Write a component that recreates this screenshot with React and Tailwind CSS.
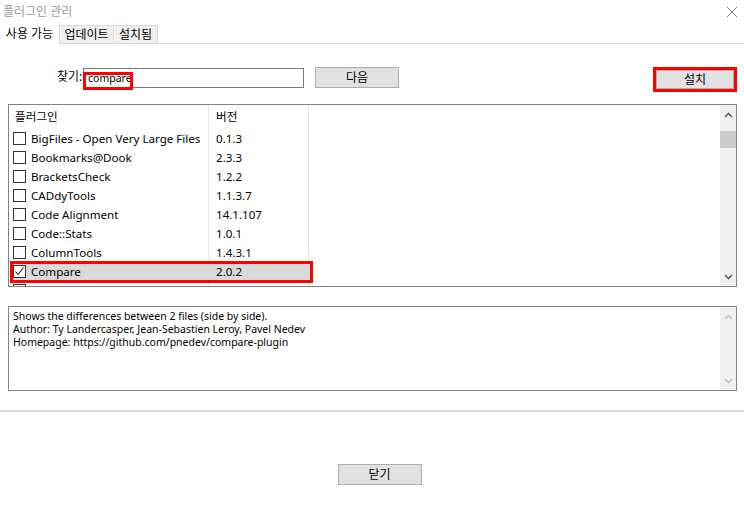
import React from "react";

const plugins = [
  ["BigFiles - Open Very Large Files", "0.1.3"],
  ["Bookmarks@Dook", "2.3.3"],
  ["BracketsCheck", "1.2.2"],
  ["CADdyTools", "1.1.3.7"],
  ["Code Alignment", "14.1.107"],
  ["Code::Stats", "1.0.1"],
  ["ColumnTools", "1.4.3.1"],
];

const font = { fontFamily: '"Noto Sans", "Noto Sans CJK KR", sans-serif' };

function Box({ checked }) {
  return (
    <div className="w-[13px] h-[13px] border border-[#333] bg-white flex items-center justify-center shrink-0">
      {checked && (
        <svg width="11" height="11" viewBox="0 0 11 11">
          <polyline points="1.5,5.5 4,8.5 9.5,1.5" fill="none" stroke="#222" strokeWidth="1.1" />
        </svg>
      )}
    </div>
  );
}

function Chevron({ up, color }) {
  return (
    <svg width="9" height="6" viewBox="0 0 9 6">
      <polyline
        points={up ? "1,5 4.5,1.5 8,5" : "1,1 4.5,4.5 8,1"}
        fill="none"
        stroke={color}
        strokeWidth="1.6"
      />
    </svg>
  );
}

export default function App() {
  return (
    <div className="w-[744px] h-[509px] bg-white text-[12px] text-black flex flex-col overflow-hidden" style={font}>
      {/* Title */}
      <div className="h-[23px] flex items-center justify-between pl-[3px] pr-[6px]">
        <span className="text-[#9a9a9a] text-[12px] leading-none">플러그인 관리</span>
        <svg width="12" height="12" viewBox="0 0 12 12">
          <path d="M1 1 L11 11 M11 1 L1 11" stroke="#808080" strokeWidth="1" />
        </svg>
      </div>
      {/* Tabs */}
      <div className="h-[21px] flex items-end">
        <div className="h-[21px] w-[60px] bg-white border-r border-[#d9d9d9] flex items-center justify-center text-[12px] leading-none">사용 가능</div>
        <div className="h-[19px] w-[54px] bg-[#f0f0f0] border-t border-r border-b border-[#d9d9d9] flex items-center justify-center text-[12px] leading-none">업데이트</div>
        <div className="h-[19px] w-[44px] bg-[#f0f0f0] border-t border-r border-b border-[#d9d9d9] flex items-center justify-center text-[12px] leading-none">설치됨</div>
        <div className="flex-1 border-b border-[#d9d9d9]" />
      </div>

      {/* Search row */}
      <div className="mt-[23px] h-[25px] flex items-start">
        <span className="ml-[57px] mt-[3px] w-[26px] text-[12px] leading-[14px]">찾기:</span>
        <div className="relative mt-[1px] w-[221px] h-[20px] border border-[#7a7a7a] bg-white">
          <span className="absolute left-[4px] top-[2px] text-[10.5px] leading-[14px]">compare</span>
          <div className="absolute left-[-1px] top-[3px] w-[50px] h-[18px] border-[3px] border-[#ff0000]" />
        </div>
        <button className="ml-[11px] w-[84px] h-[21px] bg-[#e1e1e1] border border-[#adadad] text-[12px] leading-none flex items-center justify-center">다음</button>
        <div className="ml-auto mr-[7px] w-[84px] h-[25px] border-[3px] border-[#ff0000] bg-white">
          <div className="w-full h-full bg-[#e1e1e1] border border-[#adadad] flex items-center justify-center text-[12px] leading-none">설치</div>
        </div>
      </div>

      {/* Plugin list */}
      <div className="mt-[12px] mx-[8px] mr-[7px] h-[183px] border border-[#828282] flex">
        <div className="relative flex-1 overflow-hidden text-[11.6px]">
          {/* column lines */}
          <div className="absolute left-[199px] top-0 bottom-0 w-px bg-[#e5e5e5]" />
          <div className="absolute left-[299px] top-0 bottom-0 w-px bg-[#e5e5e5]" />
          <div className="h-[24px] flex items-center">
            <span className="w-[200px] pl-[6px]">플러그인</span>
            <span className="pl-[7px]">버전</span>
          </div>
          {plugins.map(([n, v]) => (
            <div key={n} className="h-[19px] flex items-center">
              <div className="w-[200px] flex items-center pl-[4px]">
                <Box />
                <span className="ml-[5px] whitespace-nowrap">{n}</span>
              </div>
              <span className="pl-[7px]">{v}</span>
            </div>
          ))}
          <div className="relative h-[19px] flex items-center">
            <div className="absolute left-[1px] top-0 w-[301px] h-[19px] bg-[#d9d9d9]" />
            <div className="relative w-[200px] flex items-center pl-[4px]">
              <Box checked />
              <span className="ml-[5px]">Compare</span>
            </div>
            <span className="relative pl-[7px]">2.0.2</span>
            <div className="absolute left-[1px] top-[-1px] w-[303px] h-[22px] border-[3px] border-[#ff0000]" />
          </div>
          <div className="h-[19px] flex items-start pl-[4px] pt-[3px]">
            <Box />
          </div>
        </div>
        {/* scrollbar */}
        <div className="w-[16px] bg-[#f0f0f0] flex flex-col items-center">
          <div className="h-[19px] flex items-center justify-center"><Chevron up color="#606060" /></div>
          <div className="mt-[7px] w-[16px] h-[17px] bg-[#cdcdcd]" />
          <div className="flex-1" />
          <div className="h-[19px] flex items-center justify-center"><Chevron color="#606060" /></div>
        </div>
      </div>

      {/* Description */}
      <div className="mt-[19px] mx-[8px] mr-[7px] h-[85px] border border-[#828282] flex">
        <div className="flex-1 pl-[4px] pt-[3px] text-[10.5px] leading-[13px]">
          <div>Shows the differences between 2 files (side by side).</div>
          <div>Author: Ty Landercasper, Jean-Sebastien Leroy, Pavel Nedev</div>
          <div>Homepage: https://github.com/pnedev/compare-plugin</div>
        </div>
        <div className="w-[16px] bg-[#f0f0f0] flex flex-col items-center justify-between">
          <div className="h-[19px] flex items-center justify-center"><Chevron up color="#c0c0c0" /></div>
          <div className="h-[19px] flex items-center justify-center"><Chevron color="#c0c0c0" /></div>
        </div>
      </div>

      <div className="mt-[19px] h-[2px] bg-[#dcdcdc]" />

      <div className="mt-[52px] flex justify-center">
        <button className="ml-[15px] w-[84px] h-[21px] bg-[#e1e1e1] border border-[#adadad] text-[12px] leading-none flex items-center justify-center">닫기</button>
      </div>
    </div>
  );
}
